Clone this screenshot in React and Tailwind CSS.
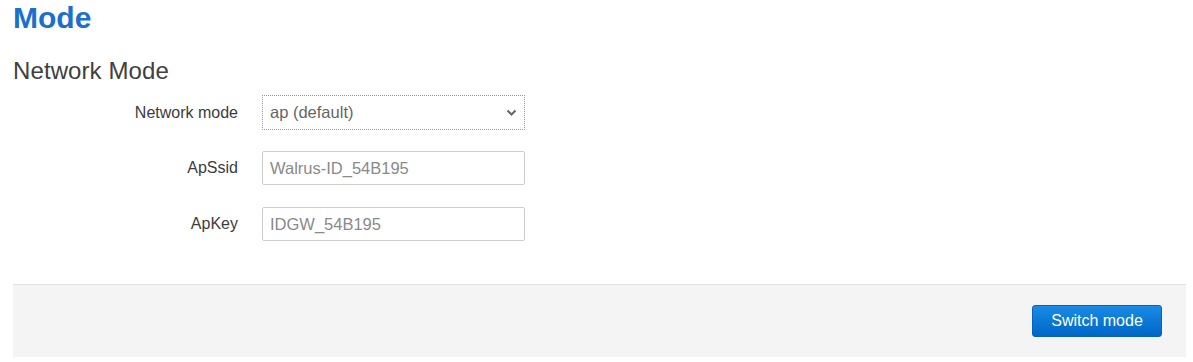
import React, { useState } from 'react';

const App = () => {
  const [mode, setMode] = useState('ap');
  const [ssid, setSsid] = useState('');
  const [key, setKey] = useState('');

  return (
    <div className="w-[1193px] h-[362px] bg-white font-['Liberation_Sans',Arial,sans-serif] overflow-hidden">
      <div className="pl-[13px] pr-[7px]">
        {/* Title */}
        <h1 className="text-[30px] leading-[36px] font-bold text-[#1b6fce]">Mode</h1>

        {/* Section */}
        <h2 className="mt-[21px] text-[24px] leading-[28px] text-[#404040] tracking-[0.1px]">Network Mode</h2>

        <div className="mt-[10px] flex flex-col">
          <div className="flex items-center h-[35px]">
            <label className="w-[225px] text-right text-[16px] text-[#3c3c3c]">Network mode</label>
            <div className="relative ml-[24px] w-[263px] h-[35px]">
              <select
                value={mode}
                onChange={(e) => setMode(e.target.value)}
                className="appearance-none w-full h-full border border-dotted border-[#999] bg-white pl-[7px] text-[16.5px] text-[#666] focus:outline-none"
              >
                <option value="ap">ap (default)</option>
                <option value="sta">sta</option>
              </select>
              <svg className="absolute right-[8px] top-[14px] pointer-events-none" width="11" height="8" viewBox="0 0 11 8">
                <path d="M1.5 1.5 L5.5 5.5 L9.5 1.5" fill="none" stroke="#666" strokeWidth="2" />
              </svg>
            </div>
          </div>

          <div className="flex items-center h-[34px] mt-[21px]">
            <label className="w-[225px] text-right text-[16px] text-[#3c3c3c]">ApSsid</label>
            <input
              value={ssid}
              onChange={(e) => setSsid(e.target.value)}
              placeholder="Walrus-ID_54B195"
              className="ml-[24px] w-[263px] h-[34px] border border-[#ccc] rounded-[2px] pl-[7px] text-[16.5px] text-[#555] placeholder:text-[#8a8a8a] focus:outline-none"
            />
          </div>

          <div className="flex items-center h-[34px] mt-[22px]">
            <label className="w-[225px] text-right text-[16px] text-[#3c3c3c]">ApKey</label>
            <input
              value={key}
              onChange={(e) => setKey(e.target.value)}
              placeholder="IDGW_54B195"
              className="ml-[24px] w-[263px] h-[34px] border border-[#ccc] rounded-[2px] pl-[7px] text-[16.5px] text-[#555] placeholder:text-[#8a8a8a] focus:outline-none"
            />
          </div>
        </div>

        {/* Footer */}
        <div className="mt-[43px] h-[73px] bg-[#f4f4f4] border-t border-[#e2e2e2] flex items-center justify-end pr-[24px]">
          <button
            type="button"
            className="h-[32px] w-[130px] rounded-[3px] bg-gradient-to-b from-[#1a8be6] to-[#0066c6] border border-[#0a62b8] text-white text-[16px]"
          >
            Switch mode
          </button>
        </div>
      </div>
    </div>
  );
};

export default App;
